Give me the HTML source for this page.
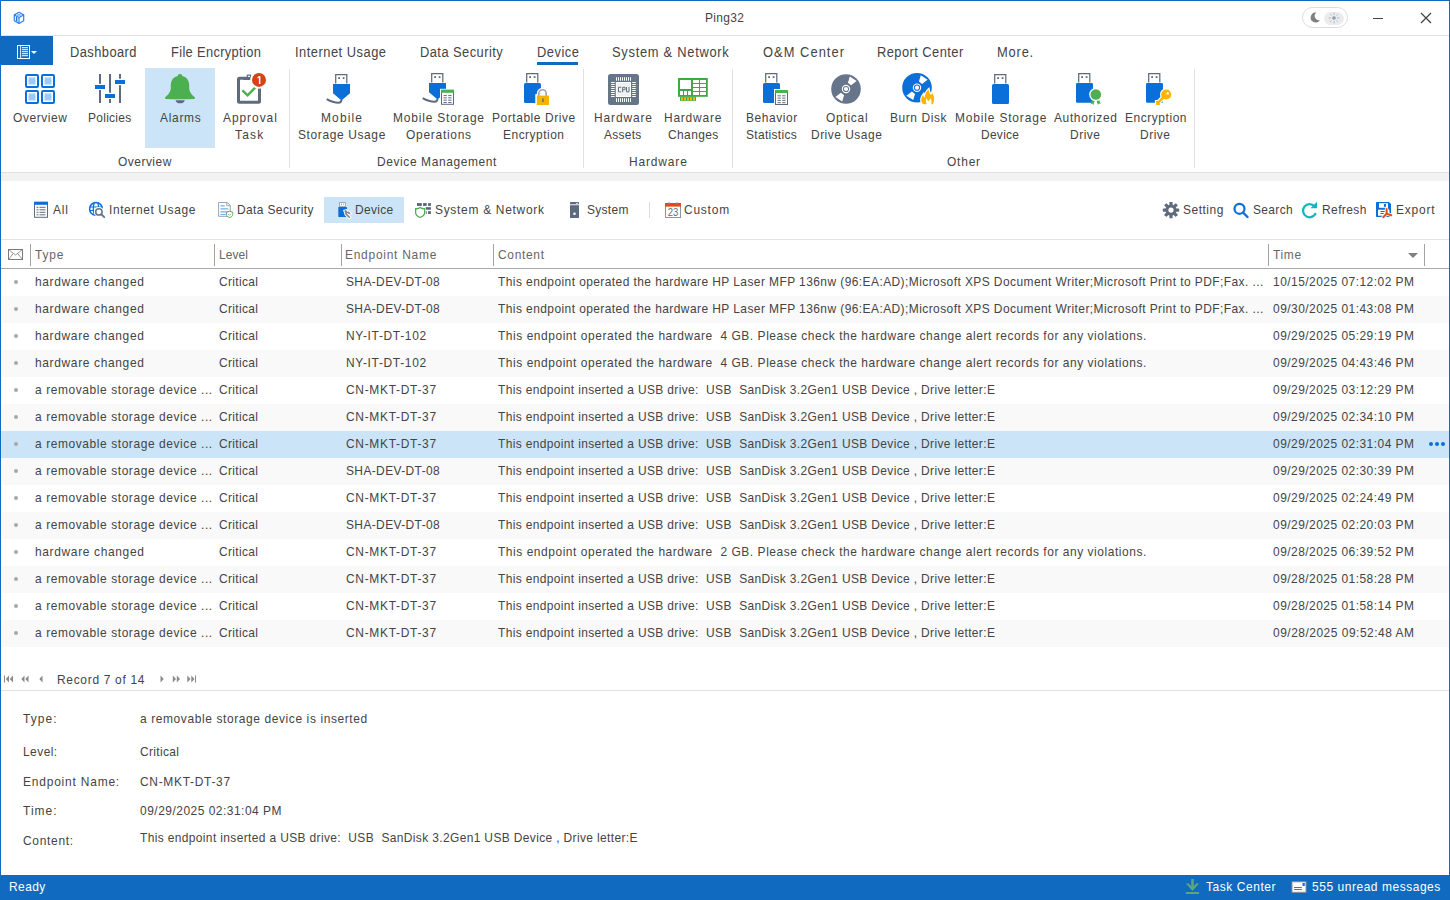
<!DOCTYPE html><html><head><meta charset="utf-8"><style>
html,body{margin:0;padding:0;width:1450px;height:900px;overflow:hidden;background:#fff}
body{position:relative;font-family:"Liberation Sans",sans-serif;color:#333}
.t{position:absolute;white-space:nowrap;line-height:16px;transform-origin:0 0}
.r{position:absolute;display:block}
</style></head><body>
<div class="r" style="left:0px;top:0px;width:1450px;height:1px;background:#0f6ac0;"></div>
<div class="r" style="left:0px;top:0px;width:1px;height:900px;background:#0f6ac0;"></div>
<div class="r" style="left:1449px;top:0px;width:1px;height:900px;background:#0f6ac0;"></div>
<div class="r" style="left:1px;top:35px;width:1448px;height:1px;background:#e3e3e3;"></div>
<svg class="r" style="left:12px;top:10px;overflow:visible" width="14" height="15" viewBox="12 10 14 15"><g fill="none" stroke="#2f80ed" stroke-width="1.2" stroke-linejoin="round"><path d="M19 12.3 L23.7 14.9 L23.7 20.7 L19 23.4 L14.3 20.7 L14.3 14.9 Z"/><path d="M14.3 14.9 L19 17.6 L23.7 14.9 M19 17.6 V23.4"/><path d="M16.6 13.6 L21.3 16.2 M21.4 13.6 L16.6 16.2" stroke-width="0.8" stroke="#5a9cf2"/></g><g fill="#2f6fd8"><rect x="15.9" y="17" width="1.1" height="4.3"/></g><rect x="17.3" y="17.8" width="0.9" height="4.2" fill="#7fb0f5"/></svg>
<div class="t" style="left:705.2px;top:9.50px;font-size:13px;color:#444;letter-spacing:0.36px;transform:scaleX(0.92)">Ping32</div>
<div class="r" style="left:1302px;top:7px;width:44px;height:19px;border:1px solid #dcdcdc;border-radius:11px;background:#fff"></div>
<div class="r" style="left:1324px;top:12px;width:20px;height:13px;border-radius:7px;background:#ececec"></div>
<svg class="r" style="left:1309px;top:11px" width="12" height="12" viewBox="0 0 12 12"><path d="M7.5 1.5 A5 5 0 1 0 11 9 A4.2 4.2 0 0 1 7.5 1.5 Z" fill="#808080"/></svg>
<svg class="r" style="left:1328px;top:12px" width="12" height="12" viewBox="0 0 12 12"><circle cx="6" cy="6" r="1.8" fill="#8a9ab0"/><g stroke="#a5b1c2" stroke-width="0.8"><path d="M6 0.5V3M6 9V11.5M0.5 6H3M9 6H11.5M2 2L3.6 3.6M8.4 8.4L10 10M2 10L3.6 8.4M8.4 3.6L10 2"/></g></svg>
<div class="r" style="left:1373px;top:18px;width:10px;height:1px;background:#444;"></div>
<svg class="r" style="left:1420px;top:12px" width="12" height="12" viewBox="0 0 12 12"><path d="M1 1L11 11M11 1L1 11" stroke="#444" stroke-width="1.3"/></svg>
<div class="r" style="left:1px;top:36px;width:52px;height:29px;background:#0f6ac0;"></div>
<svg class="r" style="left:16px;top:44px;overflow:visible" width="23" height="17" viewBox="16 44 23 17"><rect x="17.5" y="45.5" width="12" height="13" fill="none" stroke="#fff" stroke-width="1"/><rect x="20.2" y="45.5" width="0.9" height="13" fill="#fff"/><g fill="#fff"><rect x="22" y="47.2" width="6" height="1"/><rect x="22" y="49.2" width="6" height="1"/><rect x="22" y="51.2" width="6" height="1"/><rect x="22" y="53.2" width="6" height="1"/><rect x="22" y="55.2" width="6" height="1"/></g><path d="M31 51 L37 51 L34 54 Z" fill="#fff"/></svg>
<div class="t" style="left:70.2px;top:44.15px;font-size:14px;color:#444;letter-spacing:0.473px;transform:scaleX(0.92)">Dashboard</div>
<div class="t" style="left:170.9px;top:44.15px;font-size:14px;color:#444;letter-spacing:0.366px;transform:scaleX(0.92)">File Encryption</div>
<div class="t" style="left:295.0px;top:44.15px;font-size:14px;color:#444;letter-spacing:0.544px;transform:scaleX(0.92)">Internet Usage</div>
<div class="t" style="left:420.2px;top:44.15px;font-size:14px;color:#444;letter-spacing:0.487px;transform:scaleX(0.92)">Data Security</div>
<div class="t" style="left:536.5px;top:44.15px;font-size:14px;color:#444;letter-spacing:0.571px;transform:scaleX(0.92)">Device</div>
<div class="t" style="left:612.3px;top:44.15px;font-size:14px;color:#444;letter-spacing:0.788px;transform:scaleX(0.92)">System &amp; Network</div>
<div class="t" style="left:762.6px;top:44.15px;font-size:14px;color:#444;letter-spacing:1.137px;transform:scaleX(0.92)">O&amp;M Center</div>
<div class="t" style="left:877.1px;top:44.15px;font-size:14px;color:#444;letter-spacing:0.48px;transform:scaleX(0.92)">Report Center</div>
<div class="t" style="left:997.1px;top:44.15px;font-size:14px;color:#444;letter-spacing:0.888px;transform:scaleX(0.92)">More.</div>
<div class="r" style="left:537px;top:62px;width:41px;height:3px;background:#0f6ac0;"></div>
<div class="r" style="left:145px;top:68px;width:70px;height:80px;background:#cce4f7;"></div>
<div class="r" style="left:289px;top:69px;width:1px;height:99px;background:#e1e1e1;"></div>
<div class="r" style="left:583px;top:69px;width:1px;height:99px;background:#e1e1e1;"></div>
<div class="r" style="left:732px;top:69px;width:1px;height:99px;background:#e1e1e1;"></div>
<div class="r" style="left:1194px;top:69px;width:1px;height:99px;background:#e1e1e1;"></div>
<div class="r" style="left:1px;top:172px;width:1448px;height:9px;background:#f2f2f2;"></div>
<div class="r" style="left:1px;top:172px;width:1448px;height:1px;background:#e0e0e0;"></div>
<div class="t" style="left:12.5px;top:109.50px;font-size:13px;color:#444;letter-spacing:0.644px;transform:scaleX(0.92)">Overview</div>
<div class="t" style="left:88.1px;top:109.50px;font-size:13px;color:#444;letter-spacing:0.309px;transform:scaleX(0.92)">Policies</div>
<div class="t" style="left:159.5px;top:109.50px;font-size:13px;color:#444;letter-spacing:0.757px;transform:scaleX(0.92)">Alarms</div>
<div class="t" style="left:222.5px;top:109.50px;font-size:13px;color:#444;letter-spacing:1.024px;transform:scaleX(0.92)">Approval</div>
<div class="t" style="left:235.4px;top:126.50px;font-size:13px;color:#444;letter-spacing:1.342px;transform:scaleX(0.92)">Task</div>
<div class="t" style="left:321.0px;top:109.50px;font-size:13px;color:#444;letter-spacing:1.232px;transform:scaleX(0.92)">Mobile</div>
<div class="t" style="left:297.8px;top:126.50px;font-size:13px;color:#444;letter-spacing:0.68px;transform:scaleX(0.92)">Storage Usage</div>
<div class="t" style="left:393.0px;top:109.50px;font-size:13px;color:#444;letter-spacing:0.882px;transform:scaleX(0.92)">Mobile Storage</div>
<div class="t" style="left:405.8px;top:126.50px;font-size:13px;color:#444;letter-spacing:0.796px;transform:scaleX(0.92)">Operations</div>
<div class="t" style="left:491.9px;top:109.50px;font-size:13px;color:#444;letter-spacing:0.612px;transform:scaleX(0.92)">Portable Drive</div>
<div class="t" style="left:502.9px;top:126.50px;font-size:13px;color:#444;letter-spacing:0.542px;transform:scaleX(0.92)">Encryption</div>
<div class="t" style="left:593.5px;top:109.50px;font-size:13px;color:#444;letter-spacing:0.955px;transform:scaleX(0.92)">Hardware</div>
<div class="t" style="left:603.8px;top:126.50px;font-size:13px;color:#444;letter-spacing:0.306px;transform:scaleX(0.92)">Assets</div>
<div class="t" style="left:663.9px;top:109.50px;font-size:13px;color:#444;letter-spacing:0.846px;transform:scaleX(0.92)">Hardware</div>
<div class="t" style="left:667.5px;top:126.50px;font-size:13px;color:#444;letter-spacing:0.438px;transform:scaleX(0.92)">Changes</div>
<div class="t" style="left:746.1px;top:109.50px;font-size:13px;color:#444;letter-spacing:0.62px;transform:scaleX(0.92)">Behavior</div>
<div class="t" style="left:746.4px;top:126.50px;font-size:13px;color:#444;letter-spacing:0.344px;transform:scaleX(0.92)">Statistics</div>
<div class="t" style="left:825.5px;top:109.50px;font-size:13px;color:#444;letter-spacing:0.791px;transform:scaleX(0.92)">Optical</div>
<div class="t" style="left:811.1px;top:126.50px;font-size:13px;color:#444;letter-spacing:0.543px;transform:scaleX(0.92)">Drive Usage</div>
<div class="t" style="left:890.1px;top:109.50px;font-size:13px;color:#444;letter-spacing:0.632px;transform:scaleX(0.92)">Burn Disk</div>
<div class="t" style="left:955.0px;top:109.50px;font-size:13px;color:#444;letter-spacing:0.907px;transform:scaleX(0.92)">Mobile Storage</div>
<div class="t" style="left:981.0px;top:126.50px;font-size:13px;color:#444;letter-spacing:0.311px;transform:scaleX(0.92)">Device</div>
<div class="t" style="left:1053.7px;top:109.50px;font-size:13px;color:#444;letter-spacing:0.69px;transform:scaleX(0.92)">Authorized</div>
<div class="t" style="left:1069.8px;top:126.50px;font-size:13px;color:#444;letter-spacing:0.566px;transform:scaleX(0.92)">Drive</div>
<div class="t" style="left:1125.0px;top:109.50px;font-size:13px;color:#444;letter-spacing:0.603px;transform:scaleX(0.92)">Encryption</div>
<div class="t" style="left:1140.2px;top:126.50px;font-size:13px;color:#444;letter-spacing:0.566px;transform:scaleX(0.92)">Drive</div>
<div class="t" style="left:118.1px;top:154.10px;font-size:13px;color:#444;letter-spacing:0.535px;transform:scaleX(0.92)">Overview</div>
<div class="t" style="left:377.0px;top:154.10px;font-size:13px;color:#444;letter-spacing:0.659px;transform:scaleX(0.92)">Device Management</div>
<div class="t" style="left:628.7px;top:154.10px;font-size:13px;color:#444;letter-spacing:0.924px;transform:scaleX(0.92)">Hardware</div>
<div class="t" style="left:947.0px;top:154.10px;font-size:13px;color:#444;letter-spacing:0.866px;transform:scaleX(0.92)">Other</div>
<svg class="r" style="left:25px;top:74px;overflow:visible" width="30" height="30" viewBox="25 74 30 30"><rect x="26" y="75" width="12" height="12" rx="1" fill="none" stroke="#0a6fd8" stroke-width="2"/><rect x="28.5" y="77.5" width="7" height="7" fill="#9ccaff"/><rect x="42" y="75" width="12" height="12" rx="1" fill="none" stroke="#0a6fd8" stroke-width="2"/><rect x="44.5" y="77.5" width="7" height="7" fill="#9ccaff"/><rect x="26" y="91" width="12" height="12" rx="1" fill="none" stroke="#0a6fd8" stroke-width="2"/><rect x="28.5" y="93.5" width="7" height="7" fill="#9ccaff"/><rect x="42" y="91" width="12" height="12" rx="1" fill="none" stroke="#0a6fd8" stroke-width="2"/><rect x="44.5" y="93.5" width="7" height="7" fill="#9ccaff"/></svg>
<svg class="r" style="left:94px;top:73px;overflow:visible" width="32" height="32" viewBox="94 73 32 32"><g fill="#5e6b7f"><rect x="99" y="74" width="2" height="9.8"/><rect x="99" y="90" width="2" height="13"/><rect x="109" y="74" width="2" height="18.8"/><rect x="109" y="99" width="2" height="4"/><rect x="119" y="74" width="2" height="4.7"/><rect x="119" y="85.2" width="2" height="17.8"/></g><g fill="#0a6fd8"><rect x="95" y="85" width="10" height="4"/><rect x="105" y="94" width="10" height="4"/><rect x="115" y="80" width="10" height="4"/></g></svg>
<svg class="r" style="left:163px;top:72px;overflow:visible" width="34" height="34" viewBox="163 72 34 34"><circle cx="180" cy="76.3" r="2.4" fill="#4caf50"/><path d="M180 75.8 C185.5 75.8 189.2 79.5 189.2 85.5 L189.2 88 C189.2 92 192 95 195 97.6 Q195.3 98.8 194 98.9 Q180 99.6 166 98.9 Q164.7 98.8 165 97.6 C168 95 170.8 92 170.8 88 L170.8 85.5 C170.8 79.5 174.5 75.8 180 75.8 Z" fill="#4caf50"/><path d="M175.5 100.2 L184.8 100.2 A4.7 3.6 0 0 1 175.5 100.2 Z" fill="#5e6b7f"/></svg>
<svg class="r" style="left:235px;top:70px;overflow:visible" width="34" height="36" viewBox="235 70 34 36"><rect x="238.5" y="78.3" width="21" height="24" rx="1" fill="none" stroke="#5e6b7f" stroke-width="3"/><path d="M243.1 79.9 L244.5 77.8 L246.7 77.8 L246.7 75.5 Q246.7 74.4 247.8 74.4 L250.2 74.4 Q251.3 74.4 251.3 75.5 L251.3 79.9 Z" fill="#5e6b7f"/><rect x="247.9" y="75.7" width="2.1" height="1.2" fill="#fff"/><polyline points="242.4,90.4 247.6,95.4 255.6,87.2" fill="none" stroke="#4caf50" stroke-width="2.4"/><circle cx="259" cy="79.9" r="8.8" fill="#fff"/><circle cx="259" cy="79.9" r="7" fill="#d84315"/><path d="M258.9 76 L260.4 76 L260.4 84 L258.9 84 Z M257.2 77.8 L258.9 76 L258.9 77.6 L257.9 78.6Z" fill="#fff"/></svg>
<svg class="r" style="left:324px;top:72px;overflow:visible" width="30" height="34" viewBox="324 72 30 34"><path d="M335.7 83.6 V74.7 H346.8 V83.6" fill="none" stroke="#5e6b7f" stroke-width="1.25"/><rect x="338.2" y="77.2" width="1.8" height="1.8" fill="#5e6b7f"/><rect x="342.7" y="77.2" width="1.8" height="1.8" fill="#5e6b7f"/><path d="M333 84 H350 V93.2 L341.5 100.5 L333 93.2 Z" fill="#0a6fd8"/><path d="M326.7 99.2 Q333 102.8 338.5 102.8 Q341.3 102.6 341.5 100" fill="none" stroke="#5e6b7f" stroke-width="2"/></svg>
<svg class="r" style="left:420px;top:70px;overflow:visible" width="38" height="38" viewBox="420 70 38 38"><path d="M431.7 82.6 V73.7 H442.8 V82.6" fill="none" stroke="#5e6b7f" stroke-width="1.25"/><rect x="434.2" y="76.2" width="1.8" height="1.8" fill="#5e6b7f"/><rect x="438.7" y="76.2" width="1.8" height="1.8" fill="#5e6b7f"/><path d="M429 83 H446 V92.2 L437.5 99.5 L429 92.2 Z" fill="#0a6fd8"/><path d="M422.7 98.2 Q429 101.8 434.5 101.8 Q437.3 101.6 437.5 99" fill="none" stroke="#5e6b7f" stroke-width="2"/><rect x="440" y="88.8" width="15" height="17" fill="#fff"/><rect x="441.5" y="90.3" width="12" height="14" fill="#fff" stroke="#5e6b7f" stroke-width="1"/><rect x="441" y="89.8" width="13" height="3" fill="#4caf50"/><rect x="443.5" y="95.1" width="3.3" height="1" fill="#5e6b7f"/><rect x="448.2" y="95.1" width="3.3" height="1" fill="#5e6b7f"/><rect x="443.5" y="97.39999999999999" width="3.3" height="1" fill="#5e6b7f"/><rect x="448.2" y="97.39999999999999" width="3.3" height="1" fill="#5e6b7f"/><rect x="443.5" y="99.69999999999999" width="3.3" height="1" fill="#5e6b7f"/><rect x="448.2" y="99.69999999999999" width="3.3" height="1" fill="#5e6b7f"/><rect x="443.5" y="102.0" width="3.3" height="1" fill="#5e6b7f"/><rect x="448.2" y="102.0" width="3.3" height="1" fill="#5e6b7f"/></svg>
<svg class="r" style="left:520px;top:70px;overflow:visible" width="34" height="38" viewBox="520 70 34 38"><path d="M526.7 82.6 V73.7 H537.8 V82.6" fill="none" stroke="#5e6b7f" stroke-width="1.25"/><rect x="529.2" y="76.2" width="1.8" height="1.8" fill="#5e6b7f"/><rect x="533.7" y="76.2" width="1.8" height="1.8" fill="#5e6b7f"/><rect x="524" y="83" width="17" height="20" rx="1.5" fill="#0a6fd8"/><path d="M538.8 96 V93.5 A3.7 3.7 0 0 1 546.2 93.5 V96" fill="none" stroke="#fff" stroke-width="4"/><rect x="535.3" y="94.1" width="15.2" height="12.4" fill="#fff"/><path d="M538.8 96 V93.5 A3.7 3.7 0 0 1 546.2 93.5 V96" fill="none" stroke="#9aa5b4" stroke-width="1.6"/><rect x="536.8" y="95.6" width="12.2" height="9.4" fill="#f5b400"/><rect x="542.3" y="98.5" width="1.4" height="3.5" fill="#5e6b7f"/></svg>
<svg class="r" style="left:606px;top:72px;overflow:visible" width="36" height="36" viewBox="606 72 36 36"><rect x="608" y="74" width="31" height="31" rx="2.5" fill="#66758a"/><rect x="615.8" y="82" width="15.2" height="15" fill="#fff"/><rect x="616.8" y="83" width="13.2" height="13" fill="#eef0f1"/><rect x="616" y="77" width="1" height="3.8" rx="0.5" fill="#fff"/><rect x="616" y="98.1" width="1" height="3.8" rx="0.5" fill="#fff"/><rect x="611" y="82" width="3.8" height="1" rx="0.5" fill="#fff"/><rect x="632.1" y="82" width="3.8" height="1" rx="0.5" fill="#fff"/><rect x="618" y="77" width="1" height="3.8" rx="0.5" fill="#fff"/><rect x="618" y="98.1" width="1" height="3.8" rx="0.5" fill="#fff"/><rect x="611" y="84" width="3.8" height="1" rx="0.5" fill="#fff"/><rect x="632.1" y="84" width="3.8" height="1" rx="0.5" fill="#fff"/><rect x="620" y="77" width="1" height="3.8" rx="0.5" fill="#fff"/><rect x="620" y="98.1" width="1" height="3.8" rx="0.5" fill="#fff"/><rect x="611" y="86" width="3.8" height="1" rx="0.5" fill="#fff"/><rect x="632.1" y="86" width="3.8" height="1" rx="0.5" fill="#fff"/><rect x="622" y="77" width="1" height="3.8" rx="0.5" fill="#fff"/><rect x="622" y="98.1" width="1" height="3.8" rx="0.5" fill="#fff"/><rect x="611" y="88" width="3.8" height="1" rx="0.5" fill="#fff"/><rect x="632.1" y="88" width="3.8" height="1" rx="0.5" fill="#fff"/><rect x="624" y="77" width="1" height="3.8" rx="0.5" fill="#fff"/><rect x="624" y="98.1" width="1" height="3.8" rx="0.5" fill="#fff"/><rect x="611" y="90" width="3.8" height="1" rx="0.5" fill="#fff"/><rect x="632.1" y="90" width="3.8" height="1" rx="0.5" fill="#fff"/><rect x="626" y="77" width="1" height="3.8" rx="0.5" fill="#fff"/><rect x="626" y="98.1" width="1" height="3.8" rx="0.5" fill="#fff"/><rect x="611" y="92" width="3.8" height="1" rx="0.5" fill="#fff"/><rect x="632.1" y="92" width="3.8" height="1" rx="0.5" fill="#fff"/><rect x="628" y="77" width="1" height="3.8" rx="0.5" fill="#fff"/><rect x="628" y="98.1" width="1" height="3.8" rx="0.5" fill="#fff"/><rect x="611" y="94" width="3.8" height="1" rx="0.5" fill="#fff"/><rect x="632.1" y="94" width="3.8" height="1" rx="0.5" fill="#fff"/><rect x="630" y="77" width="1" height="3.8" rx="0.5" fill="#fff"/><rect x="630" y="98.1" width="1" height="3.8" rx="0.5" fill="#fff"/><rect x="611" y="96" width="3.8" height="1" rx="0.5" fill="#fff"/><rect x="632.1" y="96" width="3.8" height="1" rx="0.5" fill="#fff"/><g fill="none" stroke="#5e6b7f" stroke-width="0.95"><path d="M621.2 87.3 H618.5 V91.8 H621.2"/><path d="M622.6 92.2 V87.3 H625.1 V89.7 H622.6"/><path d="M626.5 87 V91.8 H629 V87"/></g></svg>
<svg class="r" style="left:676px;top:76px;overflow:visible" width="34" height="27" viewBox="676 76 34 27"><rect x="678" y="78" width="29.8" height="18.8" fill="#3daa42"/><rect x="680" y="96.5" width="16" height="4.3" fill="#3daa42"/><rect x="680" y="80" width="11" height="9" fill="#fff"/><rect x="680" y="91" width="3" height="4" fill="#fff"/><rect x="684" y="91" width="3" height="4" fill="#fff"/><rect x="688" y="91" width="3" height="4" fill="#fff"/><rect x="693" y="80" width="6" height="3" fill="#fff"/><rect x="693" y="84" width="6" height="3" fill="#fff"/><rect x="693" y="88" width="6" height="3" fill="#fff"/><rect x="693" y="92" width="6" height="3" fill="#fff"/><rect x="700" y="80" width="6" height="3" fill="#fff"/><rect x="700" y="84" width="6" height="3" fill="#fff"/><rect x="700" y="88" width="6" height="3" fill="#fff"/><rect x="700" y="92" width="6" height="3" fill="#fff"/><rect x="681" y="97.2" width="2" height="3" fill="#ffb400"/><rect x="684" y="97.2" width="2" height="3" fill="#ffb400"/><rect x="687" y="97.2" width="2" height="3" fill="#ffb400"/><rect x="690" y="97.2" width="2" height="3" fill="#ffb400"/><rect x="693" y="97.2" width="2" height="3" fill="#ffb400"/></svg>
<svg class="r" style="left:760px;top:70px;overflow:visible" width="32" height="38" viewBox="760 70 32 38"><path d="M765.7 82.6 V73.7 H776.8 V82.6" fill="none" stroke="#5e6b7f" stroke-width="1.25"/><rect x="768.2" y="76.2" width="1.8" height="1.8" fill="#5e6b7f"/><rect x="772.7" y="76.2" width="1.8" height="1.8" fill="#5e6b7f"/><rect x="763" y="83" width="17" height="20" rx="1.5" fill="#0a6fd8"/><rect x="774" y="89" width="15" height="17" fill="#fff"/><rect x="775.5" y="90.5" width="12" height="14" fill="#fff" stroke="#5e6b7f" stroke-width="1"/><rect x="775" y="90" width="13" height="3" fill="#4caf50"/><rect x="777.5" y="95.3" width="3.3" height="1" fill="#5e6b7f"/><rect x="782.2" y="95.3" width="3.3" height="1" fill="#5e6b7f"/><rect x="777.5" y="97.6" width="3.3" height="1" fill="#5e6b7f"/><rect x="782.2" y="97.6" width="3.3" height="1" fill="#5e6b7f"/><rect x="777.5" y="99.89999999999999" width="3.3" height="1" fill="#5e6b7f"/><rect x="782.2" y="99.89999999999999" width="3.3" height="1" fill="#5e6b7f"/><rect x="777.5" y="102.2" width="3.3" height="1" fill="#5e6b7f"/><rect x="782.2" y="102.2" width="3.3" height="1" fill="#5e6b7f"/></svg>
<svg class="r" style="left:828px;top:71px;overflow:visible" width="36" height="36" viewBox="828 71 36 36"><circle cx="846" cy="89" r="14.8" fill="#66758a"/><path d="M849.8 76.6 L856.6 81 L851.1 85.2 L847.9 82.7 Z" fill="#fff"/><path d="M842.2 101.4 L835.4 97 L840.9 92.8 L844.1 95.3 Z" fill="#fff"/><circle cx="846" cy="89" r="4.2" fill="#fff"/><circle cx="846" cy="89" r="3.1" fill="#66758a"/><circle cx="846" cy="89" r="2.1" fill="#fff"/></svg>
<svg class="r" style="left:899px;top:70px;overflow:visible" width="38" height="38" viewBox="899 70 38 38"><circle cx="917" cy="87.7" r="14.8" fill="#0a6fd8"/><path d="M920.8 75.3 L927.6 79.7 L922.1 83.9 L918.9 81.4 Z" fill="#fff"/><path d="M913.2 100.10000000000001 L906.4 95.7 L911.9 91.5 L915.1 94.0 Z" fill="#fff"/><circle cx="917" cy="87.7" r="4.2" fill="#fff"/><circle cx="917" cy="87.7" r="3.1" fill="#0a6fd8"/><circle cx="917" cy="87.7" r="2.1" fill="#fff"/><path d="M922.3 103.6 C920.6 100.5 921 97.2 923.2 94.6 C923.3 96.3 923.8 97.3 924.6 97.8 C924.8 94.5 926.3 91.3 928.6 89.2 C928.9 91.8 929.8 93.7 931.3 95 C931.6 94.2 931.9 93.6 932.2 93 C934.4 95.8 934.8 100.3 933 104 C932.5 104.3 931.8 104.4 931.2 104.2 C932 101.8 931.5 99.8 930.3 98.2 C929.8 99.5 929 100.6 928 101.2 C927.7 99.9 927.2 98.9 926.4 98.2 C925.6 100 925.9 102.3 926.7 104.2 C925.3 104.4 923.5 104.3 922.3 103.6 Z" fill="#fff" stroke="#fff" stroke-width="2.2"/><path d="M922.3 103.6 C920.6 100.5 921 97.2 923.2 94.6 C923.3 96.3 923.8 97.3 924.6 97.8 C924.8 94.5 926.3 91.3 928.6 89.2 C928.9 91.8 929.8 93.7 931.3 95 C931.6 94.2 931.9 93.6 932.2 93 C934.4 95.8 934.8 100.3 933 104 C932.5 104.3 931.8 104.4 931.2 104.2 C932 101.8 931.5 99.8 930.3 98.2 C929.8 99.5 929 100.6 928 101.2 C927.7 99.9 927.2 98.9 926.4 98.2 C925.6 100 925.9 102.3 926.7 104.2 C925.3 104.4 923.5 104.3 922.3 103.6 Z" fill="#ffb400"/></svg>
<svg class="r" style="left:988px;top:70px;overflow:visible" width="26" height="38" viewBox="988 70 26 38"><path d="M994.7 83.6 V74.7 H1005.8 V83.6" fill="none" stroke="#5e6b7f" stroke-width="1.25"/><rect x="997.2" y="77.2" width="1.8" height="1.8" fill="#5e6b7f"/><rect x="1001.7" y="77.2" width="1.8" height="1.8" fill="#5e6b7f"/><rect x="992" y="84" width="17" height="20" rx="1.5" fill="#0a6fd8"/></svg>
<svg class="r" style="left:1072px;top:70px;overflow:visible" width="34" height="38" viewBox="1072 70 34 38"><path d="M1078.7 82.6 V73.7 H1089.8 V82.6" fill="none" stroke="#5e6b7f" stroke-width="1.25"/><rect x="1081.2" y="76.2" width="1.8" height="1.8" fill="#5e6b7f"/><rect x="1085.7" y="76.2" width="1.8" height="1.8" fill="#5e6b7f"/><rect x="1076" y="83" width="17" height="19.8" rx="1.2" fill="#0a6fd8"/><path d="M1092.6 98.5 L1090.6 104.3 L1092.3 103.6 L1093.3 105.2 L1095.2 99.3Z M1098.6 98.5 L1100.8 104.1 L1099 103.5 L1098 105 L1096 99.3Z" fill="#4caf50"/><circle cx="1095.8" cy="94.5" r="6.6" fill="#fff"/><circle cx="1095.8" cy="94.5" r="5.3" fill="#4caf50"/></svg>
<svg class="r" style="left:1142px;top:70px;overflow:visible" width="34" height="38" viewBox="1142 70 34 38"><path d="M1148.7 82.6 V73.7 H1159.8 V82.6" fill="none" stroke="#5e6b7f" stroke-width="1.25"/><rect x="1151.2" y="76.2" width="1.8" height="1.8" fill="#5e6b7f"/><rect x="1155.7" y="76.2" width="1.8" height="1.8" fill="#5e6b7f"/><rect x="1146" y="83" width="17" height="19.8" rx="1.2" fill="#0a6fd8"/><g fill="#fff" stroke="#fff" stroke-width="2.2"><circle cx="1166.2" cy="94.5" r="5.1"/><path d="M1163.6 95.2 L1165.5 97.1 L1159.8 102.8 L1159.8 104.9 L1156 104.9 L1156 101.1 L1158 101.1 Z"/></g><g fill="#ffb400" stroke="#ffb400" stroke-width="0"><circle cx="1166.2" cy="94.5" r="5.1"/><path d="M1163.6 95.2 L1165.5 97.1 L1159.8 102.8 L1159.8 104.9 L1156 104.9 L1156 101.1 L1158 101.1 Z"/></g><circle cx="1167.7" cy="93.4" r="1.2" fill="#fff"/></svg>
<div class="r" style="left:324px;top:197px;width:80px;height:26px;background:#cce4f7;"></div>
<div class="r" style="left:649px;top:202px;width:1px;height:16px;background:#dcdcdc;"></div>
<div class="r" style="left:1px;top:239px;width:1448px;height:1px;background:#e3e3e3;"></div>
<div class="t" style="left:52.5px;top:201.50px;font-size:13px;color:#444;letter-spacing:0.817px;transform:scaleX(0.92)">All</div>
<div class="t" style="left:109.0px;top:201.50px;font-size:13px;color:#444;letter-spacing:0.656px;transform:scaleX(0.92)">Internet Usage</div>
<div class="t" style="left:236.7px;top:201.50px;font-size:13px;color:#444;letter-spacing:0.416px;transform:scaleX(0.92)">Data Security</div>
<div class="t" style="left:354.8px;top:201.50px;font-size:13px;color:#444;letter-spacing:0.354px;transform:scaleX(0.92)">Device</div>
<div class="t" style="left:435.1px;top:201.50px;font-size:13px;color:#444;letter-spacing:0.77px;transform:scaleX(0.92)">System &amp; Network</div>
<div class="t" style="left:586.5px;top:201.50px;font-size:13px;color:#444;letter-spacing:0.331px;transform:scaleX(0.92)">System</div>
<div class="t" style="left:684.3px;top:201.50px;font-size:13px;color:#444;letter-spacing:0.845px;transform:scaleX(0.92)">Custom</div>
<div class="t" style="left:1182.6px;top:201.50px;font-size:13px;color:#444;letter-spacing:0.553px;transform:scaleX(0.92)">Setting</div>
<div class="t" style="left:1252.5px;top:201.50px;font-size:13px;color:#444;letter-spacing:0.39px;transform:scaleX(0.92)">Search</div>
<div class="t" style="left:1321.7px;top:201.50px;font-size:13px;color:#444;letter-spacing:0.455px;transform:scaleX(0.92)">Refresh</div>
<div class="t" style="left:1395.7px;top:201.50px;font-size:13px;color:#444;letter-spacing:0.897px;transform:scaleX(0.92)">Export</div>
<svg class="r" style="left:33px;top:200px;overflow:visible" width="16" height="20" viewBox="33 200 16 20"><rect x="34.5" y="202.3" width="13" height="15" fill="#fff" stroke="#5e6b7f" stroke-width="1"/><rect x="34" y="201.8" width="14" height="3" fill="#0a6fd8"/><rect x="36.5" y="206.8" width="2" height="1" fill="#5e6b7f"/><rect x="39.5" y="206.8" width="6" height="1" fill="#5e6b7f"/><rect x="36.5" y="209.3" width="2" height="1" fill="#5e6b7f"/><rect x="39.5" y="209.3" width="6" height="1" fill="#5e6b7f"/><rect x="36.5" y="211.8" width="2" height="1" fill="#5e6b7f"/><rect x="39.5" y="211.8" width="6" height="1" fill="#5e6b7f"/><rect x="36.5" y="214.3" width="2" height="1" fill="#5e6b7f"/><rect x="39.5" y="214.3" width="6" height="1" fill="#5e6b7f"/></svg>
<svg class="r" style="left:87px;top:200px;overflow:visible" width="20" height="20" viewBox="87 200 20 20"><circle cx="96" cy="208.9" r="6.4" fill="none" stroke="#0a6fd8" stroke-width="1.5"/><path d="M94.3 202.8 C93.2 206 93.2 211.5 94.3 215 M97.7 202.8 C98.8 206 98.8 211.5 97.7 215" fill="none" stroke="#0a6fd8" stroke-width="1.2"/><path d="M89.8 207 H102.2 M89.8 210.5 H102.2" stroke="#0a6fd8" stroke-width="1.2"/><circle cx="98.9" cy="211.9" r="5" fill="#fff"/><circle cx="98.9" cy="211.9" r="3.2" fill="#fff" stroke="#66758a" stroke-width="1.5"/><path d="M101.2 214.2 L104.2 217.2" stroke="#66758a" stroke-width="1.9" stroke-linecap="round"/></svg>
<svg class="r" style="left:216px;top:200px;overflow:visible" width="20" height="21" viewBox="216 200 20 21"><path d="M218.6 202.5 H227.3 L230.3 205.5 V216.3 H218.6 Z" fill="#fff" stroke="#9aa4b2" stroke-width="1"/><path d="M226.8 202.5 V205.8 H230.3" fill="none" stroke="#9aa4b2" stroke-width="1"/><g fill="#6fb1ea"><rect x="220.3" y="205.3" width="4.6" height="1.3" rx="0.6"/><rect x="220.3" y="208.3" width="8.2" height="1.3" rx="0.6"/><rect x="220.3" y="211.3" width="7.5" height="1.3" rx="0.6"/><rect x="220.3" y="214" width="5.5" height="1" rx="0.5"/></g><path d="M229.6 211.2 L232.8 212.3 V214.3 C232.8 216 231.2 217.1 229.6 217.7 C228 217.1 226.4 216 226.4 214.3 V212.3 Z" fill="#fff" stroke="#4caf50" stroke-width="1"/><path d="M228.3 214.1 L229.5 215.3 L231 213.8" fill="none" stroke="#8a8fa0" stroke-width="0.8"/></svg>
<svg class="r" style="left:336px;top:200px;overflow:visible" width="16" height="21" viewBox="336 200 16 21"><rect x="339.6" y="202.4" width="5.7" height="4.3" fill="#fff" stroke="#8c97a6" stroke-width="0.8"/><rect x="341" y="203.6" width="0.7" height="1.6" fill="#6b7688"/><rect x="343" y="203.6" width="0.7" height="1.6" fill="#9aa4b2"/><rect x="338.3" y="206.9" width="8.7" height="10" rx="0.5" fill="#0a6fd8"/><path d="M344.3 210.6 L346.2 210.1 L347.1 211.8 L348.6 211.4 L350.8 213.5 L349.3 214.2 L347.5 212.9 L346.8 213.6 L350.3 217.2 L349.2 218.3 L345.6 214.7 Z" fill="#fff" stroke="#fff" stroke-width="2"/><path d="M344.3 210.6 L346.2 210.1 L347.1 211.8 L348.6 211.4 L350.8 213.5 L349.3 214.2 L347.5 212.9 L346.8 213.6 L350.3 217.2 L349.2 218.3 L345.6 214.7 Z" fill="#7c8899"/></svg>
<svg class="r" style="left:413px;top:201px;overflow:visible" width="20" height="19" viewBox="413 201 20 19"><g fill="#556479"><rect x="417" y="203.1" width="4.8" height="2.8"/><rect x="423.1" y="203.1" width="3.6" height="2.8"/><rect x="428.1" y="203.1" width="2.8" height="2.8"/><rect x="425.3" y="207.2" width="5.6" height="2.5"/><rect x="428.1" y="211.2" width="2.8" height="2.8"/><rect x="425.3" y="211.2" width="1.4" height="2.8"/></g><path d="M420.15 207.6 C421.5 208.6 423.2 208.9 424.7 208.7 V212.3 C424.7 214.8 422.8 216.6 420.15 217.5 C417.5 216.6 415.6 214.8 415.6 212.3 V208.7 C417.1 208.9 418.8 208.6 420.15 207.6 Z" fill="#fff" stroke="#fff" stroke-width="2.4"/><path d="M420.15 207.6 C421.5 208.6 423.2 208.9 424.7 208.7 V212.3 C424.7 214.8 422.8 216.6 420.15 217.5 C417.5 216.6 415.6 214.8 415.6 212.3 V208.7 C417.1 208.9 418.8 208.6 420.15 207.6 Z" fill="#fff" stroke="#4caf50" stroke-width="1.3"/></svg>
<svg class="r" style="left:568px;top:200px;overflow:visible" width="13" height="20" viewBox="568 200 13 20"><rect x="570" y="202" width="9" height="16" rx="0.5" fill="#5e6b7f"/><rect x="570" y="204.3" width="9" height="0.9" fill="#fff"/><rect x="576" y="202.9" width="2" height="0.8" fill="#fff"/><circle cx="574.5" cy="213.8" r="1.3" fill="#fff"/></svg>
<svg class="r" style="left:663px;top:200px;overflow:visible" width="20" height="20" viewBox="663 200 20 20"><rect x="665.5" y="203.5" width="15" height="14" fill="#fff" stroke="#8c97a6" stroke-width="1"/><rect x="665" y="203" width="16" height="3.6" fill="#e04a1a"/><rect x="668.5" y="201.8" width="1" height="2.5" fill="#8c97a6"/><rect x="676.5" y="201.8" width="1" height="2.5" fill="#8c97a6"/><text x="673" y="215.9" font-family="Liberation Sans" font-size="10.5" text-anchor="middle" fill="#5e6b7f" transform="translate(673 0) scale(0.9 1) translate(-673 0)">23</text></svg>
<svg class="r" style="left:1160px;top:199px;overflow:visible" width="22" height="23" viewBox="1160 199 22 23"><rect x="1169.4" y="201.9" width="3.2" height="4" rx="0.6" fill="#5e6b7f" transform="rotate(0 1171 210.1)"/><rect x="1169.4" y="201.9" width="3.2" height="4" rx="0.6" fill="#5e6b7f" transform="rotate(45 1171 210.1)"/><rect x="1169.4" y="201.9" width="3.2" height="4" rx="0.6" fill="#5e6b7f" transform="rotate(90 1171 210.1)"/><rect x="1169.4" y="201.9" width="3.2" height="4" rx="0.6" fill="#5e6b7f" transform="rotate(135 1171 210.1)"/><rect x="1169.4" y="201.9" width="3.2" height="4" rx="0.6" fill="#5e6b7f" transform="rotate(180 1171 210.1)"/><rect x="1169.4" y="201.9" width="3.2" height="4" rx="0.6" fill="#5e6b7f" transform="rotate(225 1171 210.1)"/><rect x="1169.4" y="201.9" width="3.2" height="4" rx="0.6" fill="#5e6b7f" transform="rotate(270 1171 210.1)"/><rect x="1169.4" y="201.9" width="3.2" height="4" rx="0.6" fill="#5e6b7f" transform="rotate(315 1171 210.1)"/><circle cx="1171" cy="210.1" r="5.6" fill="#5e6b7f"/><circle cx="1171" cy="210.1" r="2.6" fill="#fff"/></svg>
<svg class="r" style="left:1230px;top:200px;overflow:visible" width="22" height="21" viewBox="1230 200 22 21"><circle cx="1239.5" cy="208.8" r="5" fill="none" stroke="#0a6fd8" stroke-width="2.2"/><path d="M1243 212.5 L1247.5 217" stroke="#0a6fd8" stroke-width="2.4" stroke-linecap="round"/></svg>
<svg class="r" style="left:1300px;top:199px;overflow:visible" width="20" height="22" viewBox="1300 199 20 22"><path d="M1314.6 206.3 A6.6 6.6 0 1 0 1315.8 213" fill="none" stroke="#17b3c1" stroke-width="2.2"/><path d="M1317 201.8 L1317 208.3 L1310.5 208.3 Z" fill="#17b3c1"/></svg>
<svg class="r" style="left:1374px;top:200px;overflow:visible" width="20" height="20" viewBox="1374 200 20 20"><path d="M1376.6 202 H1389 L1391 204 V216.9 H1376.6 Q1376 216.9 1376 216.3 V202.6 Q1376 202 1376.6 202 Z" fill="#0a6fd8"/><rect x="1379" y="203.2" width="9" height="4.6" fill="#fff"/><rect x="1383.9" y="204" width="2.1" height="2.8" fill="#0a6fd8"/><rect x="1378" y="209.7" width="11.4" height="6" fill="#fff"/><g fill="#0a6fd8"><rect x="1380.3" y="211" width="4.6" height="1.1" rx="0.5"/><rect x="1380.3" y="213" width="3.6" height="1.1" rx="0.5"/></g><g stroke="#fff" stroke-width="3.6" stroke-linecap="round" fill="none"><path d="M1386.6 213.8 L1386.6 209 M1386.6 213.8 L1383.2 217.3 M1386.6 213.8 L1391.3 215.2"/></g><g stroke="#e24d1b" stroke-width="2" stroke-linecap="round" fill="none"><path d="M1386.6 213.8 L1386.6 209 M1386.6 213.8 L1383.2 217.3 M1386.6 213.8 L1391.3 215.2"/></g></svg>
<div class="r" style="left:1px;top:268px;width:1448px;height:1px;background:#a9a9a9;"></div>
<svg class="r" style="left:7px;top:248px;overflow:visible" width="17" height="13" viewBox="7 248 17 13"><rect x="8.5" y="249.5" width="14" height="10" fill="none" stroke="#7b7b7b" stroke-width="1"/><path d="M8.8 249.8 L15.5 255 L22.2 249.8 M8.8 259.2 L13.3 253.5 M22.2 259.2 L17.7 253.5" fill="none" stroke="#7b7b7b" stroke-width="0.8"/></svg>
<div class="r" style="left:30px;top:244px;width:1px;height:22px;background:#a3a3a3;"></div>
<div class="r" style="left:214px;top:244px;width:1px;height:22px;background:#a3a3a3;"></div>
<div class="r" style="left:341px;top:244px;width:1px;height:22px;background:#a3a3a3;"></div>
<div class="r" style="left:493px;top:244px;width:1px;height:22px;background:#a3a3a3;"></div>
<div class="r" style="left:1268px;top:244px;width:1px;height:22px;background:#a3a3a3;"></div>
<div class="r" style="left:1424px;top:244px;width:1px;height:22px;background:#a3a3a3;"></div>
<div class="t" style="left:34.5px;top:246.50px;font-size:13px;color:#666;letter-spacing:0.93px;transform:scaleX(0.92)">Type</div>
<div class="t" style="left:218.8px;top:246.50px;font-size:13px;color:#666;letter-spacing:0.084px;transform:scaleX(0.92)">Level</div>
<div class="t" style="left:345.4px;top:246.50px;font-size:13px;color:#666;letter-spacing:0.801px;transform:scaleX(0.92)">Endpoint Name</div>
<div class="t" style="left:497.5px;top:246.50px;font-size:13px;color:#666;letter-spacing:0.742px;transform:scaleX(0.92)">Content</div>
<div class="t" style="left:1273px;top:246.50px;font-size:13px;color:#666;letter-spacing:0.712px;transform:scaleX(0.92)">Time</div>
<svg class="r" style="left:1404px;top:250px;overflow:visible" width="18" height="10" viewBox="1404 250 18 10"><path d="M1408 253 L1418 253 L1413 258Z" fill="#7f7f7f"/></svg>
<div class="r" style="left:14px;top:280px;width:4px;height:4px;border-radius:2px;background:#a8a8a8"></div>
<div class="t" style="left:34.7px;top:273.50px;font-size:13px;color:#444;letter-spacing:0.711px;transform:scaleX(0.92)">hardware changed</div>
<div class="t" style="left:218.9px;top:273.50px;font-size:13px;color:#444;letter-spacing:0.38px;transform:scaleX(0.92)">Critical</div>
<div class="t" style="left:345.5px;top:273.50px;font-size:13px;color:#444;letter-spacing:0.42px;transform:scaleX(0.92)">SHA-DEV-DT-08</div>
<div class="t" style="left:497.9px;top:273.50px;font-size:13px;color:#444;letter-spacing:0.466px;transform:scaleX(0.92)">This endpoint operated the hardware HP Laser MFP 136nw (96:EA:AD);Microsoft XPS Document Writer;Microsoft Print to PDF;Fax. ...</div>
<div class="t" style="left:1272.9px;top:273.50px;font-size:13px;color:#444;letter-spacing:0.518px;transform:scaleX(0.92)">10/15/2025 07:12:02 PM</div>
<div class="r" style="left:2px;top:296px;width:1447px;height:27px;background:#f9f9f9;"></div>
<div class="r" style="left:14px;top:307px;width:4px;height:4px;border-radius:2px;background:#a8a8a8"></div>
<div class="t" style="left:34.7px;top:300.50px;font-size:13px;color:#444;letter-spacing:0.711px;transform:scaleX(0.92)">hardware changed</div>
<div class="t" style="left:218.9px;top:300.50px;font-size:13px;color:#444;letter-spacing:0.38px;transform:scaleX(0.92)">Critical</div>
<div class="t" style="left:345.5px;top:300.50px;font-size:13px;color:#444;letter-spacing:0.42px;transform:scaleX(0.92)">SHA-DEV-DT-08</div>
<div class="t" style="left:497.9px;top:300.50px;font-size:13px;color:#444;letter-spacing:0.466px;transform:scaleX(0.92)">This endpoint operated the hardware HP Laser MFP 136nw (96:EA:AD);Microsoft XPS Document Writer;Microsoft Print to PDF;Fax. ...</div>
<div class="t" style="left:1272.9px;top:300.50px;font-size:13px;color:#444;letter-spacing:0.518px;transform:scaleX(0.92)">09/30/2025 01:43:08 PM</div>
<div class="r" style="left:14px;top:334px;width:4px;height:4px;border-radius:2px;background:#a8a8a8"></div>
<div class="t" style="left:34.7px;top:327.50px;font-size:13px;color:#444;letter-spacing:0.711px;transform:scaleX(0.92)">hardware changed</div>
<div class="t" style="left:218.9px;top:327.50px;font-size:13px;color:#444;letter-spacing:0.38px;transform:scaleX(0.92)">Critical</div>
<div class="t" style="left:345.5px;top:327.50px;font-size:13px;color:#444;letter-spacing:0.743px;transform:scaleX(0.92)">NY-IT-DT-102</div>
<div class="t" style="left:497.9px;top:327.50px;font-size:13px;color:#444;letter-spacing:0.596px;transform:scaleX(0.92)">This endpoint operated the hardware&nbsp; 4 GB. Please check the hardware change alert records for any violations.</div>
<div class="t" style="left:1272.9px;top:327.50px;font-size:13px;color:#444;letter-spacing:0.518px;transform:scaleX(0.92)">09/29/2025 05:29:19 PM</div>
<div class="r" style="left:2px;top:350px;width:1447px;height:27px;background:#f9f9f9;"></div>
<div class="r" style="left:14px;top:361px;width:4px;height:4px;border-radius:2px;background:#a8a8a8"></div>
<div class="t" style="left:34.7px;top:354.50px;font-size:13px;color:#444;letter-spacing:0.711px;transform:scaleX(0.92)">hardware changed</div>
<div class="t" style="left:218.9px;top:354.50px;font-size:13px;color:#444;letter-spacing:0.38px;transform:scaleX(0.92)">Critical</div>
<div class="t" style="left:345.5px;top:354.50px;font-size:13px;color:#444;letter-spacing:0.743px;transform:scaleX(0.92)">NY-IT-DT-102</div>
<div class="t" style="left:497.9px;top:354.50px;font-size:13px;color:#444;letter-spacing:0.596px;transform:scaleX(0.92)">This endpoint operated the hardware&nbsp; 4 GB. Please check the hardware change alert records for any violations.</div>
<div class="t" style="left:1272.9px;top:354.50px;font-size:13px;color:#444;letter-spacing:0.518px;transform:scaleX(0.92)">09/29/2025 04:43:46 PM</div>
<div class="r" style="left:14px;top:388px;width:4px;height:4px;border-radius:2px;background:#a8a8a8"></div>
<div class="t" style="left:34.7px;top:381.50px;font-size:13px;color:#444;letter-spacing:0.636px;transform:scaleX(0.92)">a removable storage device ...</div>
<div class="t" style="left:218.9px;top:381.50px;font-size:13px;color:#444;letter-spacing:0.38px;transform:scaleX(0.92)">Critical</div>
<div class="t" style="left:345.5px;top:381.50px;font-size:13px;color:#444;letter-spacing:0.761px;transform:scaleX(0.92)">CN-MKT-DT-37</div>
<div class="t" style="left:497.9px;top:381.50px;font-size:13px;color:#444;letter-spacing:0.391px;transform:scaleX(0.92)">This endpoint inserted a USB drive:&nbsp; USB&nbsp; SanDisk 3.2Gen1 USB Device , Drive letter:E</div>
<div class="t" style="left:1272.9px;top:381.50px;font-size:13px;color:#444;letter-spacing:0.518px;transform:scaleX(0.92)">09/29/2025 03:12:29 PM</div>
<div class="r" style="left:2px;top:404px;width:1447px;height:27px;background:#f9f9f9;"></div>
<div class="r" style="left:14px;top:415px;width:4px;height:4px;border-radius:2px;background:#a8a8a8"></div>
<div class="t" style="left:34.7px;top:408.50px;font-size:13px;color:#444;letter-spacing:0.636px;transform:scaleX(0.92)">a removable storage device ...</div>
<div class="t" style="left:218.9px;top:408.50px;font-size:13px;color:#444;letter-spacing:0.38px;transform:scaleX(0.92)">Critical</div>
<div class="t" style="left:345.5px;top:408.50px;font-size:13px;color:#444;letter-spacing:0.761px;transform:scaleX(0.92)">CN-MKT-DT-37</div>
<div class="t" style="left:497.9px;top:408.50px;font-size:13px;color:#444;letter-spacing:0.391px;transform:scaleX(0.92)">This endpoint inserted a USB drive:&nbsp; USB&nbsp; SanDisk 3.2Gen1 USB Device , Drive letter:E</div>
<div class="t" style="left:1272.9px;top:408.50px;font-size:13px;color:#444;letter-spacing:0.518px;transform:scaleX(0.92)">09/29/2025 02:34:10 PM</div>
<div class="r" style="left:1px;top:431px;width:1448px;height:27px;background:#cce4f7;"></div>
<div class="r" style="left:14px;top:442px;width:4px;height:4px;border-radius:2px;background:#a8a8a8"></div>
<div class="t" style="left:34.7px;top:435.50px;font-size:13px;color:#444;letter-spacing:0.636px;transform:scaleX(0.92)">a removable storage device ...</div>
<div class="t" style="left:218.9px;top:435.50px;font-size:13px;color:#444;letter-spacing:0.38px;transform:scaleX(0.92)">Critical</div>
<div class="t" style="left:345.5px;top:435.50px;font-size:13px;color:#444;letter-spacing:0.761px;transform:scaleX(0.92)">CN-MKT-DT-37</div>
<div class="t" style="left:497.9px;top:435.50px;font-size:13px;color:#444;letter-spacing:0.391px;transform:scaleX(0.92)">This endpoint inserted a USB drive:&nbsp; USB&nbsp; SanDisk 3.2Gen1 USB Device , Drive letter:E</div>
<div class="t" style="left:1272.9px;top:435.50px;font-size:13px;color:#444;letter-spacing:0.518px;transform:scaleX(0.92)">09/29/2025 02:31:04 PM</div>
<div class="r" style="left:2px;top:458px;width:1447px;height:27px;background:#f9f9f9;"></div>
<div class="r" style="left:14px;top:469px;width:4px;height:4px;border-radius:2px;background:#a8a8a8"></div>
<div class="t" style="left:34.7px;top:462.50px;font-size:13px;color:#444;letter-spacing:0.636px;transform:scaleX(0.92)">a removable storage device ...</div>
<div class="t" style="left:218.9px;top:462.50px;font-size:13px;color:#444;letter-spacing:0.38px;transform:scaleX(0.92)">Critical</div>
<div class="t" style="left:345.5px;top:462.50px;font-size:13px;color:#444;letter-spacing:0.42px;transform:scaleX(0.92)">SHA-DEV-DT-08</div>
<div class="t" style="left:497.9px;top:462.50px;font-size:13px;color:#444;letter-spacing:0.391px;transform:scaleX(0.92)">This endpoint inserted a USB drive:&nbsp; USB&nbsp; SanDisk 3.2Gen1 USB Device , Drive letter:E</div>
<div class="t" style="left:1272.9px;top:462.50px;font-size:13px;color:#444;letter-spacing:0.518px;transform:scaleX(0.92)">09/29/2025 02:30:39 PM</div>
<div class="r" style="left:14px;top:496px;width:4px;height:4px;border-radius:2px;background:#a8a8a8"></div>
<div class="t" style="left:34.7px;top:489.50px;font-size:13px;color:#444;letter-spacing:0.636px;transform:scaleX(0.92)">a removable storage device ...</div>
<div class="t" style="left:218.9px;top:489.50px;font-size:13px;color:#444;letter-spacing:0.38px;transform:scaleX(0.92)">Critical</div>
<div class="t" style="left:345.5px;top:489.50px;font-size:13px;color:#444;letter-spacing:0.761px;transform:scaleX(0.92)">CN-MKT-DT-37</div>
<div class="t" style="left:497.9px;top:489.50px;font-size:13px;color:#444;letter-spacing:0.391px;transform:scaleX(0.92)">This endpoint inserted a USB drive:&nbsp; USB&nbsp; SanDisk 3.2Gen1 USB Device , Drive letter:E</div>
<div class="t" style="left:1272.9px;top:489.50px;font-size:13px;color:#444;letter-spacing:0.518px;transform:scaleX(0.92)">09/29/2025 02:24:49 PM</div>
<div class="r" style="left:2px;top:512px;width:1447px;height:27px;background:#f9f9f9;"></div>
<div class="r" style="left:14px;top:523px;width:4px;height:4px;border-radius:2px;background:#a8a8a8"></div>
<div class="t" style="left:34.7px;top:516.50px;font-size:13px;color:#444;letter-spacing:0.636px;transform:scaleX(0.92)">a removable storage device ...</div>
<div class="t" style="left:218.9px;top:516.50px;font-size:13px;color:#444;letter-spacing:0.38px;transform:scaleX(0.92)">Critical</div>
<div class="t" style="left:345.5px;top:516.50px;font-size:13px;color:#444;letter-spacing:0.42px;transform:scaleX(0.92)">SHA-DEV-DT-08</div>
<div class="t" style="left:497.9px;top:516.50px;font-size:13px;color:#444;letter-spacing:0.391px;transform:scaleX(0.92)">This endpoint inserted a USB drive:&nbsp; USB&nbsp; SanDisk 3.2Gen1 USB Device , Drive letter:E</div>
<div class="t" style="left:1272.9px;top:516.50px;font-size:13px;color:#444;letter-spacing:0.518px;transform:scaleX(0.92)">09/29/2025 02:20:03 PM</div>
<div class="r" style="left:14px;top:550px;width:4px;height:4px;border-radius:2px;background:#a8a8a8"></div>
<div class="t" style="left:34.7px;top:543.50px;font-size:13px;color:#444;letter-spacing:0.711px;transform:scaleX(0.92)">hardware changed</div>
<div class="t" style="left:218.9px;top:543.50px;font-size:13px;color:#444;letter-spacing:0.38px;transform:scaleX(0.92)">Critical</div>
<div class="t" style="left:345.5px;top:543.50px;font-size:13px;color:#444;letter-spacing:0.761px;transform:scaleX(0.92)">CN-MKT-DT-37</div>
<div class="t" style="left:497.9px;top:543.50px;font-size:13px;color:#444;letter-spacing:0.596px;transform:scaleX(0.92)">This endpoint operated the hardware&nbsp; 2 GB. Please check the hardware change alert records for any violations.</div>
<div class="t" style="left:1272.9px;top:543.50px;font-size:13px;color:#444;letter-spacing:0.518px;transform:scaleX(0.92)">09/28/2025 06:39:52 PM</div>
<div class="r" style="left:2px;top:566px;width:1447px;height:27px;background:#f9f9f9;"></div>
<div class="r" style="left:14px;top:577px;width:4px;height:4px;border-radius:2px;background:#a8a8a8"></div>
<div class="t" style="left:34.7px;top:570.50px;font-size:13px;color:#444;letter-spacing:0.636px;transform:scaleX(0.92)">a removable storage device ...</div>
<div class="t" style="left:218.9px;top:570.50px;font-size:13px;color:#444;letter-spacing:0.38px;transform:scaleX(0.92)">Critical</div>
<div class="t" style="left:345.5px;top:570.50px;font-size:13px;color:#444;letter-spacing:0.761px;transform:scaleX(0.92)">CN-MKT-DT-37</div>
<div class="t" style="left:497.9px;top:570.50px;font-size:13px;color:#444;letter-spacing:0.391px;transform:scaleX(0.92)">This endpoint inserted a USB drive:&nbsp; USB&nbsp; SanDisk 3.2Gen1 USB Device , Drive letter:E</div>
<div class="t" style="left:1272.9px;top:570.50px;font-size:13px;color:#444;letter-spacing:0.518px;transform:scaleX(0.92)">09/28/2025 01:58:28 PM</div>
<div class="r" style="left:14px;top:604px;width:4px;height:4px;border-radius:2px;background:#a8a8a8"></div>
<div class="t" style="left:34.7px;top:597.50px;font-size:13px;color:#444;letter-spacing:0.636px;transform:scaleX(0.92)">a removable storage device ...</div>
<div class="t" style="left:218.9px;top:597.50px;font-size:13px;color:#444;letter-spacing:0.38px;transform:scaleX(0.92)">Critical</div>
<div class="t" style="left:345.5px;top:597.50px;font-size:13px;color:#444;letter-spacing:0.761px;transform:scaleX(0.92)">CN-MKT-DT-37</div>
<div class="t" style="left:497.9px;top:597.50px;font-size:13px;color:#444;letter-spacing:0.391px;transform:scaleX(0.92)">This endpoint inserted a USB drive:&nbsp; USB&nbsp; SanDisk 3.2Gen1 USB Device , Drive letter:E</div>
<div class="t" style="left:1272.9px;top:597.50px;font-size:13px;color:#444;letter-spacing:0.518px;transform:scaleX(0.92)">09/28/2025 01:58:14 PM</div>
<div class="r" style="left:2px;top:620px;width:1447px;height:27px;background:#f9f9f9;"></div>
<div class="r" style="left:14px;top:631px;width:4px;height:4px;border-radius:2px;background:#a8a8a8"></div>
<div class="t" style="left:34.7px;top:624.50px;font-size:13px;color:#444;letter-spacing:0.636px;transform:scaleX(0.92)">a removable storage device ...</div>
<div class="t" style="left:218.9px;top:624.50px;font-size:13px;color:#444;letter-spacing:0.38px;transform:scaleX(0.92)">Critical</div>
<div class="t" style="left:345.5px;top:624.50px;font-size:13px;color:#444;letter-spacing:0.761px;transform:scaleX(0.92)">CN-MKT-DT-37</div>
<div class="t" style="left:497.9px;top:624.50px;font-size:13px;color:#444;letter-spacing:0.391px;transform:scaleX(0.92)">This endpoint inserted a USB drive:&nbsp; USB&nbsp; SanDisk 3.2Gen1 USB Device , Drive letter:E</div>
<div class="t" style="left:1272.9px;top:624.50px;font-size:13px;color:#444;letter-spacing:0.551px;transform:scaleX(0.92)">09/28/2025 09:52:48 AM</div>
<div class="r" style="left:1429px;top:442px;width:4px;height:4px;border-radius:2px;background:#0a6fd8"></div>
<div class="r" style="left:1435px;top:442px;width:4px;height:4px;border-radius:2px;background:#0a6fd8"></div>
<div class="r" style="left:1441px;top:442px;width:4px;height:4px;border-radius:2px;background:#0a6fd8"></div>
<div class="r" style="left:1px;top:690px;width:1448px;height:1px;background:#e3e3e3;"></div>
<svg class="r" style="left:2px;top:672px;overflow:visible" width="198" height="14" viewBox="2 672 198 14"><g fill="#8a8a8a"><rect x="4" y="675.5" width="1" height="7"/><path d="M9 675.5 L5.8 679 L9 682.5Z M13 675.5 L9.8 679 L13 682.5Z"/><path d="M24.5 675.5 L21.3 679 L24.5 682.5Z M28.5 675.5 L25.3 679 L28.5 682.5Z"/><path d="M42.5 675.5 L39.3 679 L42.5 682.5Z"/><path d="M160.5 675.5 L163.7 679 L160.5 682.5Z"/><path d="M172.8 675.5 L176 679 L172.8 682.5Z M176.8 675.5 L180 679 L176.8 682.5Z"/><path d="M187.3 675.5 L190.5 679 L187.3 682.5Z M191.3 675.5 L194.5 679 L191.3 682.5Z"/><rect x="195" y="675.5" width="1" height="7"/></g></svg>
<div class="t" style="left:56.8px;top:671.50px;font-size:13px;color:#444;letter-spacing:0.756px;transform:scaleX(0.92)">Record 7 of 14</div>
<div class="t" style="left:22.9px;top:710.60px;font-size:13px;color:#444;letter-spacing:1.181px;transform:scaleX(0.92)">Type:</div>
<div class="t" style="left:22.9px;top:743.50px;font-size:13px;color:#444;letter-spacing:0.494px;transform:scaleX(0.92)">Level:</div>
<div class="t" style="left:22.9px;top:773.70px;font-size:13px;color:#444;letter-spacing:0.872px;transform:scaleX(0.92)">Endpoint Name:</div>
<div class="t" style="left:22.9px;top:803.40px;font-size:13px;color:#444;letter-spacing:1.123px;transform:scaleX(0.92)">Time:</div>
<div class="t" style="left:22.9px;top:833.30px;font-size:13px;color:#444;letter-spacing:0.773px;transform:scaleX(0.92)">Content:</div>
<div class="t" style="left:139.6px;top:710.60px;font-size:13px;color:#444;letter-spacing:0.659px;transform:scaleX(0.92)">a removable storage device is inserted</div>
<div class="t" style="left:139.6px;top:743.50px;font-size:13px;color:#444;letter-spacing:0.38px;transform:scaleX(0.92)">Critical</div>
<div class="t" style="left:139.6px;top:773.70px;font-size:13px;color:#444;letter-spacing:0.761px;transform:scaleX(0.92)">CN-MKT-DT-37</div>
<div class="t" style="left:139.6px;top:803.40px;font-size:13px;color:#444;letter-spacing:0.544px;transform:scaleX(0.92)">09/29/2025 02:31:04 PM</div>
<div class="t" style="left:139.6px;top:829.70px;font-size:13px;color:#444;letter-spacing:0.399px;transform:scaleX(0.92)">This endpoint inserted a USB drive:&nbsp; USB&nbsp; SanDisk 3.2Gen1 USB Device , Drive letter:E</div>
<div class="r" style="left:0px;top:875px;width:1450px;height:25px;background:#0f6ac0;"></div>
<div class="t" style="left:9.2px;top:878.90px;font-size:13px;color:#fff;letter-spacing:0.47px;transform:scaleX(0.92)">Ready</div>
<svg class="r" style="left:1184px;top:877px;overflow:visible" width="17" height="19" viewBox="1184 877 17 19"><g fill="#5aa87a"><rect x="1191.2" y="879" width="2.6" height="9"/><path d="M1185.9 883.5 L1188.8 883.5 L1192.5 887.5 L1196.2 883.5 L1199.1 883.5 L1192.5 891 Z"/><rect x="1185.9" y="892" width="13.2" height="2"/></g></svg>
<div class="t" style="left:1205.8px;top:878.90px;font-size:13px;color:#fff;letter-spacing:0.617px;transform:scaleX(0.92)">Task Center</div>
<svg class="r" style="left:1290px;top:879px;overflow:visible" width="19" height="16" viewBox="1290 879 19 16"><rect x="1292" y="881.8" width="14" height="10.5" fill="#fff" stroke="#8a9099" stroke-width="1"/><rect x="1302.5" y="883" width="2.3" height="3" fill="#1f6fd0"/><rect x="1294" y="887" width="7.8" height="0.9" fill="#555d68"/><rect x="1294" y="889.1" width="7.8" height="0.9" fill="#555d68"/></svg>
<div class="t" style="left:1311.9px;top:878.90px;font-size:13px;color:#fff;letter-spacing:0.6px;transform:scaleX(0.92)">555 unread messages</div>
</body></html>
